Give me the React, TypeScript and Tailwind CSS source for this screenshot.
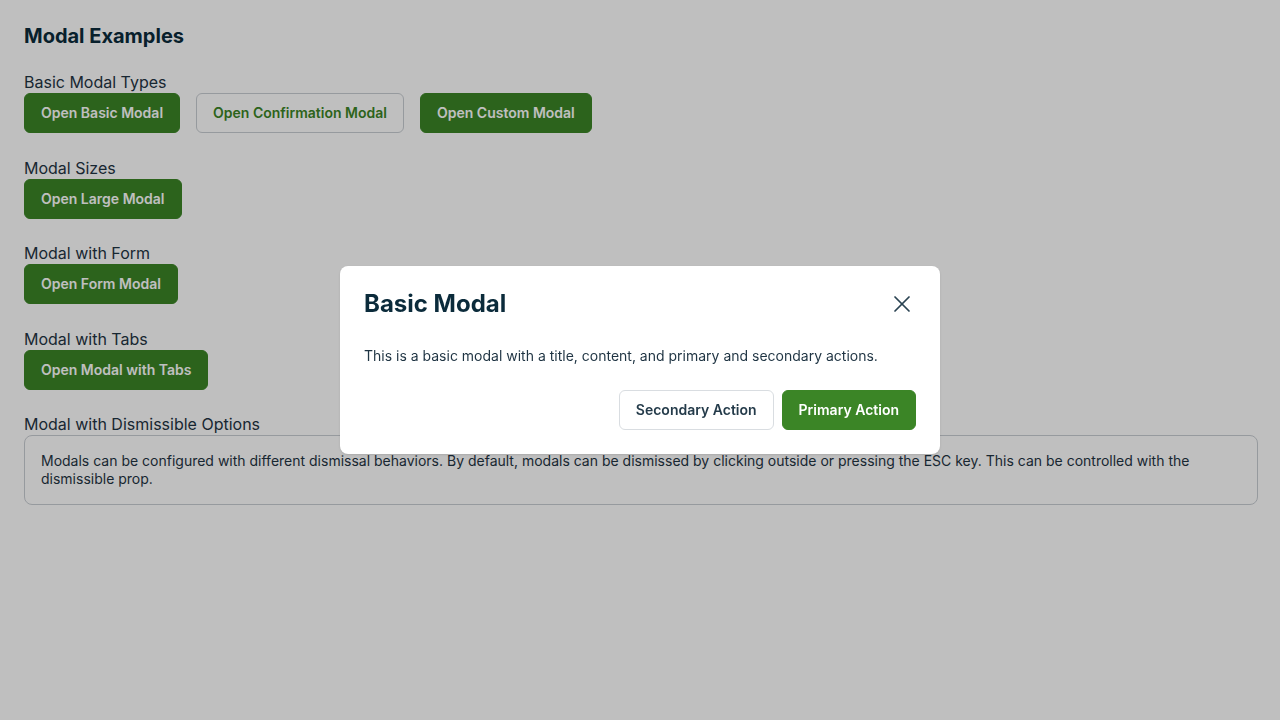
import { X } from "lucide-react";

const sections = [
  { label: "Modal Sizes", buttons: ["Open Large Modal"] },
  { label: "Modal with Form", buttons: ["Open Form Modal"] },
  { label: "Modal with Tabs", buttons: ["Open Modal with Tabs"] },
];

function PrimaryButton({ children }: { children: string }) {
  return (
    <button
      type="button"
      className="h-10 rounded-md border border-[#3b8526] bg-[#3b8526] px-4 text-sm font-semibold text-white"
    >
      {children}
    </button>
  );
}

export default function App() {
  return (
    <div className="relative min-h-[720px] bg-white font-['Inter',sans-serif] text-[#1f3443]">
      <div className="px-6 pt-[22px]">
        <h1 className="text-xl leading-7 font-bold text-[#0b2b3b]">Modal Examples</h1>

        <div className="mt-5 mb-[22.5px]">
          <p className="-mb-px text-base leading-6">Basic Modal Types</p>
          <div className="flex gap-4">
            <PrimaryButton>Open Basic Modal</PrimaryButton>
            <button
              type="button"
              className="h-10 rounded-md border border-[#c9ced3] px-4 text-sm font-semibold text-[#3b8526]"
            >
              Open Confirmation Modal
            </button>
            <PrimaryButton>Open Custom Modal</PrimaryButton>
          </div>
        </div>

        {sections.map((s) => (
          <div key={s.label} className="mb-[22.5px]">
            <p className="-mb-px text-base leading-6">{s.label}</p>
            <div className="flex gap-4">
              {s.buttons.map((b) => (
                <PrimaryButton key={b}>{b}</PrimaryButton>
              ))}
            </div>
          </div>
        ))}

        <div>
          <p className="-mb-px text-base leading-6">Modal with Dismissible Options</p>
          <div className="w-[1234px] rounded-lg border border-[#c9ced3] px-4 py-4 text-sm leading-[18px]">
            Modals can be configured with different dismissal behaviors. By default, modals can be
            dismissed by clicking outside or pressing the ESC key. This can be controlled with the
            dismissible prop.
          </div>
        </div>
      </div>

      {/* overlay */}
      <div className="fixed inset-0 flex items-center justify-center bg-black/25">
        <div className="w-[600px] rounded-lg bg-white px-6 pt-[22px] pb-6 shadow-sm">
          <div className="flex items-center justify-between">
            <h2 className="text-2xl leading-8 font-bold text-[#0b2b3b]">Basic Modal</h2>
            <button type="button" className="flex h-7 w-7 items-center justify-center text-[#2a4352]">
              <X size={28} strokeWidth={1.5} />
            </button>
          </div>
          <p className="mt-[26px] text-sm leading-5 text-[#1f3443]">
            This is a basic modal with a title, content, and primary and secondary actions.
          </p>
          <div className="mt-6 flex justify-end gap-2">
            <button
              type="button"
              className="h-10 rounded-md border border-[#d9dde1] bg-white px-4 text-sm font-semibold text-[#243b4a]"
            >
              Secondary Action
            </button>
            <PrimaryButton>Primary Action</PrimaryButton>
          </div>
        </div>
      </div>
    </div>
  );
}
